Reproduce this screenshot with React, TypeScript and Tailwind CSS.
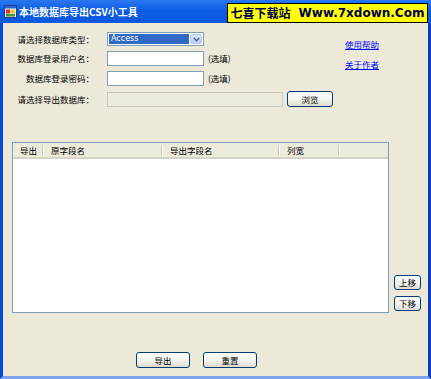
import { FC, ReactNode } from 'react';

const cjk = "font-['Noto_Sans_CJK_SC','Noto_Sans',sans-serif]";

const XpButton: FC<{ className?: string; children: ReactNode }> = ({ className = '', children }) => (
  <div
    className={`flex items-center justify-center rounded-[3px] border border-[#003c74] bg-gradient-to-b from-white via-[#f4f4ef] to-[#dedbd0] text-[8.5px] leading-none text-black ${cjk} ${className}`}
  >
    {children}
  </div>
);

const Label: FC<{ children: ReactNode }> = ({ children }) => (
  <div className={`w-[91px] shrink-0 text-right text-[8.5px] leading-none text-black ${cjk}`}>{children}</div>
);

const TitleIcon: FC = () => (
  <svg width="13" height="13" viewBox="0 0 13 13" className="shrink-0">
    <rect x="0.5" y="0.5" width="12" height="12" fill="#f1f1f1" stroke="#1c3f94" />
    <rect x="1" y="1" width="11" height="2.5" fill="#2a62d8" />
    <rect x="2" y="4.5" width="4" height="4" fill="#e0312a" />
    <rect x="7" y="4.5" width="4" height="4" fill="#f4c21d" />
    <rect x="2" y="9" width="9" height="2.5" fill="#3a9a3a" />
  </svg>
);

interface Column {
  title: string;
  width: number;
}

const columns: Column[] = [
  { title: '导出', width: 31 },
  { title: '原字段名', width: 119 },
  { title: '导出字段名', width: 117 },
  { title: '列宽', width: 60 },
];

const App: FC = () => {
  return (
    <div className="flex h-[379px] w-[431px] flex-col overflow-hidden bg-[#0a56dc]">
      {/* title bar */}
      <div className="flex h-[23px] shrink-0 bg-gradient-to-b from-[#2a78f0] via-[#0b5ae2] to-[#0c5ae0] pl-[4px]">
        <div className="flex h-full items-center">
          <TitleIcon />
          <span className={`ml-[2px] text-[10px] font-bold leading-none text-white ${cjk}`}>
            本地数据库导出CSV小工具
          </span>
        </div>
        <div className="ml-auto mr-[3px] mt-[3px] flex h-[20px] w-[201px] items-center justify-center border border-black bg-[#ffff00]">
          <span className={`text-[12px] font-bold leading-none text-[#000050] ${cjk}`}>七喜下载站</span>
          <span className="ml-[8px] font-['DejaVu_Sans',sans-serif] text-[12px] font-bold leading-none text-[#000050]">
            Www.7xdown.Com
          </span>
        </div>
      </div>

      {/* window body */}
      <div className="flex flex-1 flex-col border-b-[3px] border-l-[3px] border-r-[3px] border-b-[#7ba3ec] border-l-[#0a48d6] border-r-[#0a3cc4] bg-[#ece9d8]">
        {/* form */}
        <div className="flex pt-[9px]">
          <div className="flex w-[330px] flex-col">
            <div className="flex h-[14px] items-center">
              <Label>请选择数据库类型：</Label>
              <div className="ml-[13px] flex h-[14px] w-[97px] items-center border border-[#7f9db9] bg-white p-px">
                <div className="flex h-full flex-1 items-center bg-[#316ac5] pl-[2px] font-['DejaVu_Sans',sans-serif] text-[8px] leading-none text-white">
                  Access
                </div>
                <div className="ml-px flex h-full w-[12px] items-center justify-center rounded-[2px] border border-[#b6c9f4] bg-gradient-to-b from-[#dbe6fd] to-[#b8ccf8]">
                  <svg width="7" height="5" viewBox="0 0 7 5">
                    <path d="M0.8 1 L3.5 3.7 L6.2 1" fill="none" stroke="#4d6185" strokeWidth="1.4" />
                  </svg>
                </div>
              </div>
            </div>

            <div className="mt-[5px] flex h-[15px] items-center">
              <Label>数据库登录用户名：</Label>
              <div className="ml-[13px] h-[15px] w-[97px] border border-[#7f9db9] bg-white" />
              <span className={`ml-[4px] text-[8.5px] leading-none text-black ${cjk}`}>(选填)</span>
            </div>

            <div className="mt-[5px] flex h-[15px] items-center">
              <Label>数据库登录密码：</Label>
              <div className="ml-[13px] h-[15px] w-[97px] border border-[#7f9db9] bg-white" />
              <span className={`ml-[4px] text-[8.5px] leading-none text-black ${cjk}`}>(选填)</span>
            </div>

            <div className="mt-[5px] flex h-[16px] items-center">
              <Label>请选择导出数据库：</Label>
              <div className="ml-[13px] h-[15px] w-[176px] border border-[#c9c7ba] bg-[#ebeadb]" />
              <XpButton className="ml-[4px] h-[16px] w-[46px]">浏览</XpButton>
            </div>
          </div>

          <div className={`ml-[12px] mt-[7px] flex flex-col gap-[10px] text-[8.5px] leading-[10px] text-[#0000ff] underline ${cjk}`}>
            <span>使用帮助</span>
            <span>关于作者</span>
          </div>
        </div>

        {/* list view */}
        <div className="mt-[35px] flex pl-[9px]">
          <div className="flex h-[171px] w-[377px] flex-col border border-[#7f9db9] bg-white">
            <div className="flex h-[16px] shrink-0 border-b-2 border-[#d8d4c4] bg-[#ebeadb]">
              {columns.map((col) => (
                <div key={col.title} className="flex items-center pl-[7px]" style={{ width: col.width }}>
                  <span className={`text-[8.5px] leading-none text-black ${cjk}`}>{col.title}</span>
                  <div className="ml-auto h-[11px] w-[2px] border-l border-r border-l-[#cac7b7] border-r-white" />
                </div>
              ))}
            </div>
          </div>
          <div className="ml-[5px] flex flex-col justify-end gap-[6px] pb-[2px]">
            <XpButton className="h-[15px] w-[27px]">上移</XpButton>
            <XpButton className="h-[15px] w-[27px]">下移</XpButton>
          </div>
        </div>

        {/* bottom buttons */}
        <div className="flex gap-[13px] pl-[133px] pt-[39px]">
          <XpButton className="h-[16px] w-[54px]">导出</XpButton>
          <XpButton className="h-[16px] w-[54px]">重置</XpButton>
        </div>
      </div>
    </div>
  );
};

export default App;
